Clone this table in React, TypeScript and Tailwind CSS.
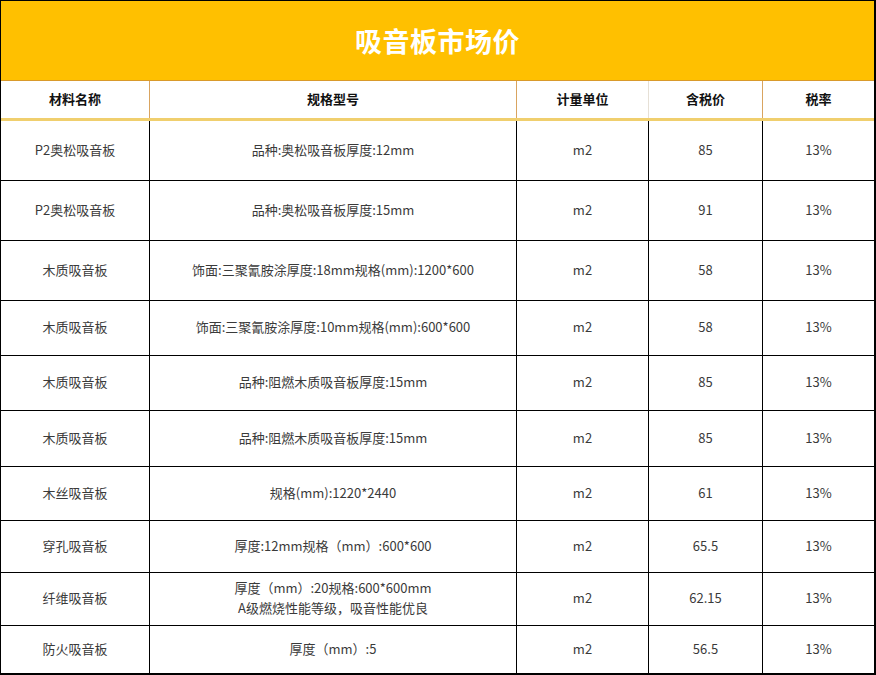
const rows = [
  { name: "P2奥松吸音板", spec: ["品种:奥松吸音板厚度:12mm"], unit: "m2", price: "85", tax: "13%", h: "h-[60px]" },
  { name: "P2奥松吸音板", spec: ["品种:奥松吸音板厚度:15mm"], unit: "m2", price: "91", tax: "13%", h: "h-[60px]" },
  { name: "木质吸音板", spec: ["饰面:三聚氰胺涂厚度:18mm规格(mm):1200*600"], unit: "m2", price: "58", tax: "13%", h: "h-[60px]" },
  { name: "木质吸音板", spec: ["饰面:三聚氰胺涂厚度:10mm规格(mm):600*600"], unit: "m2", price: "58", tax: "13%", h: "h-[55px]" },
  { name: "木质吸音板", spec: ["品种:阻燃木质吸音板厚度:15mm"], unit: "m2", price: "85", tax: "13%", h: "h-[55px]" },
  { name: "木质吸音板", spec: ["品种:阻燃木质吸音板厚度:15mm"], unit: "m2", price: "85", tax: "13%", h: "h-[56px]" },
  { name: "木丝吸音板", spec: ["规格(mm):1220*2440"], unit: "m2", price: "61", tax: "13%", h: "h-[54px]" },
  { name: "穿孔吸音板", spec: ["厚度:12mm规格（mm）:600*600"], unit: "m2", price: "65.5", tax: "13%", h: "h-[52px]" },
  { name: "纤维吸音板", spec: ["厚度（mm）:20规格:600*600mm", "A级燃烧性能等级，吸音性能优良"], unit: "m2", price: "62.15", tax: "13%", h: "h-[53px]" },
  { name: "防火吸音板", spec: ["厚度（mm）:5"], unit: "m2", price: "56.5", tax: "13%", h: "h-[47px]" },
];

const cols = "grid grid-cols-[149px_367px_132px_114px_111px]";
const font = { fontFamily: '"Noto Sans CJK SC", "Liberation Sans", sans-serif' };

const App = () => {
  return (
    <div
      className="w-[876px] h-[675px] bg-white border-l border-t border-r-2 border-b-2 border-black overflow-hidden"
      style={font}
    >
      <div className="h-[80px] bg-[#ffc000] border-b border-[#d99a2b] flex items-center justify-center">
        <h1 className="text-[27px] font-bold text-white tracking-[0.5px] pt-px">吸音板市场价</h1>
      </div>
      <div className={`${cols} h-[40px] border-b-[3px] border-[#f0cf6e] text-[13px] font-bold text-[#111]`}>
        {["材料名称", "规格型号", "计量单位", "含税价", "税率"].map((t, i) => (
          <div
            key={t}
            className={`flex items-center justify-center pb-px ${i < 4 ? (i === 2 ? "border-r border-[#e6e0d6]" : "border-r border-[#d9a460]") : ""}`}
          >
            {t}
          </div>
        ))}
      </div>
      {rows.map((r, idx) => (
        <div
          key={idx}
          className={`${cols} ${r.h} text-[13px] text-[#3a3a3a] ${idx < rows.length - 1 ? "border-b border-black" : ""}`}
        >
          <div className="flex items-center justify-center border-r border-black pb-[2px]">{r.name}</div>
          <div className="flex flex-col items-center justify-center border-r border-black leading-[20px] pb-[2px]">
            {r.spec.map((s) => (
              <span key={s}>{s}</span>
            ))}
          </div>
          <div className="flex items-center justify-center border-r border-black pb-[2px]">{r.unit}</div>
          <div className="flex items-center justify-center border-r border-black pb-[2px]">{r.price}</div>
          <div className="flex items-center justify-center pb-[2px]">{r.tax}</div>
        </div>
      ))}
    </div>
  );
};

export default App;
